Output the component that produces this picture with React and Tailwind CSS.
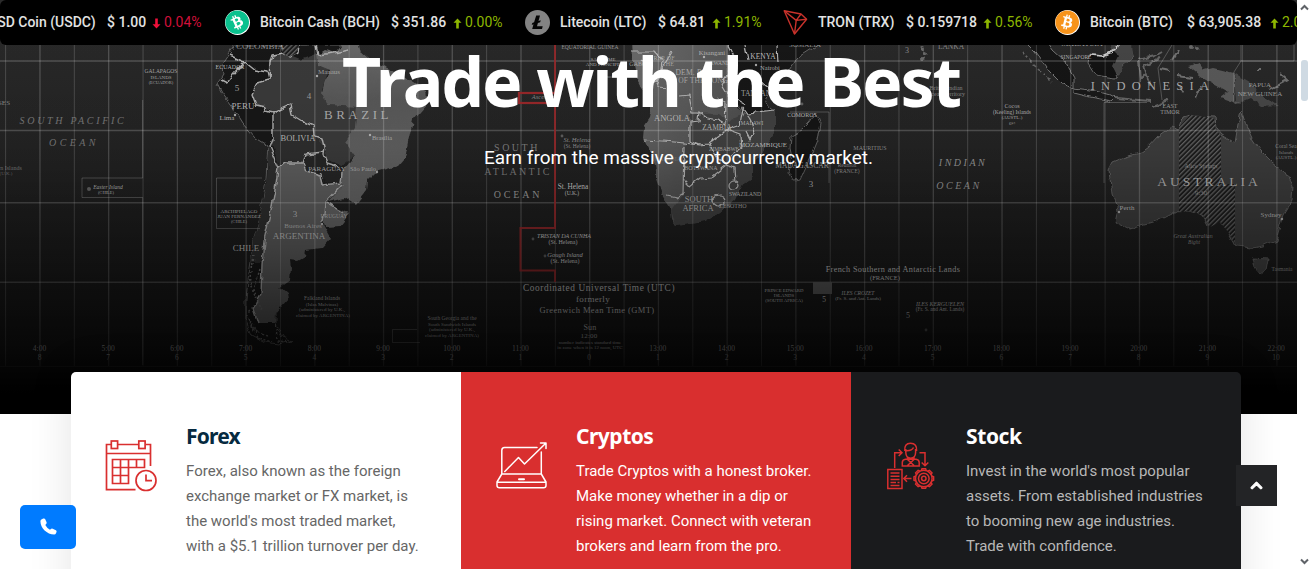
import React from "react";
import { FaBitcoin, FaPhoneAlt, FaChevronUp } from "react-icons/fa";

const up = "#8db600";
const down = "#f0103a";

function Arrow({ color, flip }) {
  return (
    <svg width="9" height="11" viewBox="0 0 9 11" className={flip ? "rotate-180" : ""}>
      <path d="M4.5 0.5 L8.5 4.8 H5.8 V10.5 H3.2 V4.8 H0.5 Z" fill={color} />
    </svg>
  );
}

function BtcLogo() {
  return (
    <span className="block size-[25px] rounded-full bg-white p-[0.3px]">
      <FaBitcoin className="size-full text-[#f7931a]" />
    </span>
  );
}

function BchLogo() {
  return (
    <span className="block size-[25px] rounded-full bg-white p-[0.3px]">
      <FaBitcoin className="size-full -rotate-[38deg] text-[#0ac18e]" />
    </span>
  );
}

function LtcLogo() {
  return (
    <svg width="25" height="25" viewBox="0 0 25 25">
      <circle cx="12.5" cy="12.5" r="12.5" fill="#838383" />
      <path d="M11.2 5.5h3.8l-1.5 5.6 2.2-.8-.5 2-2.3.8-.9 3.2h5.7l-.7 2.7H7.2l1.3-4.8-1.8.7.6-2 1.8-.7z" fill="#050505" />
    </svg>
  );
}

function TrxLogo() {
  return (
    <svg width="25" height="25" viewBox="0 0 25 25" fill="none" stroke="#c8322b" strokeWidth="1.4" strokeLinejoin="round">
      <path d="M1.2 0.8 L18 4 L23.6 9.2 L11.5 24 Z" />
      <path d="M1.2 0.8 L13.2 10.4 L23.6 9.2 M18 4 L13.2 10.4 L11.5 24" />
    </svg>
  );
}

function Coin({ logo, name, price, pct, dir, itemW, nameW, priceW }) {
  return (
    <div className={`flex h-[45px] shrink-0 items-center ${itemW}`}>
      <span className="w-[35px] shrink-0">{logo}</span>
      <span className={`shrink-0 ${nameW}`}>{name}</span>
      <span className={`shrink-0 ${priceW}`}>{price}</span>
      <span className="flex w-[12px] shrink-0 pt-[2px]">
        <Arrow color={dir === "up" ? up : down} flip={dir === "down"} />
      </span>
      <span className={dir === "up" ? "font-normal text-[#8db600]" : "font-normal text-[#f0103a]"}>{pct}</span>
    </div>
  );
}

function Ticker() {
  return (
    <div className="relative flex h-[45px] overflow-hidden rounded-md bg-black font-[Roboto,sans-serif] text-[14px] font-medium whitespace-nowrap text-[#e2e2e2]">
      <div className="flex h-[45px] w-[225px] shrink-0 items-center">
        <span className="-ml-[12px] w-[119px] shrink-0">USD Coin (USDC)</span>
        <span className="w-[45px] shrink-0">$ 1.00</span>
        <span className="flex w-[12px] shrink-0 pt-[2px]"><Arrow color={down} flip /></span>
        <span className="font-normal text-[#d0103a]">0.04%</span>
      </div>
      <Coin logo={<BchLogo />} name="Bitcoin Cash (BCH)" price="$ 351.86" pct="0.00%" dir="up" itemW="w-[300px]" nameW="w-[131px]" priceW="w-[62px]" />
      <Coin logo={<LtcLogo />} name="Litecoin (LTC)" price="$ 64.81" pct="1.91%" dir="up" itemW="w-[258px]" nameW="w-[98px]" priceW="w-[54px]" />
      <Coin logo={<TrxLogo />} name="TRON (TRX)" price="$ 0.159718" pct="0.56%" dir="up" itemW="w-[272px]" nameW="w-[88px]" priceW="w-[77px]" />
      <Coin logo={<BtcLogo />} name="Bitcoin (BTC)" price="$ 63,905.38" pct="2.07%" dir="up" itemW="w-[300px]" nameW="w-[97px]" priceW="w-[83px]" />
    </div>
  );
}

/* x, y, text, size, letter-spacing, opacity, italic */
const labels = [
  [73, 124, "SOUTH  PACIFIC", 10, 2.7, 0.5, 1],
  [74, 146, "OCEAN", 10, 3.4, 0.5, 1],
  [161, 73, "GALAPAGOS", 5.5, 0, 0.8], [161, 79, "ISLANDS", 5, 0, 0.8], [161, 84, "(ECUADOR)", 4.5, 0, 0.8],
  [4, 105, "SES", 7, 0, 0.6], [10, 170, "rn Islands", 6, 0, 0.5], [6, 175, "(U.K.)", 5, 0, 0.45],
  [260, 49, "COLOMBIA", 9, 0, 0.7], [230, 69, "ECUADOR", 6, 0, 0.9],
  [237, 91, "5", 9, 0, 0.8], [309, 99, "4", 9, 0, 0.7], [243, 109, "PERU", 9, 0, 0.9],
  [227, 120, "Lima", 7, 0, 0.9], [329, 74, "Manaus", 7, 0, 0.7],
  [358, 119, "BRAZIL", 13, 3.5, 0.8], [382, 140, "Brasília", 6.5, 0, 0.75],
  [298, 141, "BOLIVIA", 8.5, 0, 0.9], [327, 171, "PARAGUAY", 7, 0, 0.85], [363, 171, "São Paulo", 6.5, 0, 0.75],
  [108, 189, "Easter Island", 5.5, 0, 0.9, 1], [106, 194, "(CHILE)", 4.5, 0, 0.9],
  [239, 213, "ARCHIPIELAGO", 5, 0, 0.95], [239, 218, "JUAN FERNANDEZ", 5, 0, 0.95], [239, 223, "(CHILE)", 4.5, 0, 0.9],
  [295, 217, "3", 9, 0, 0.9], [303, 228, "Buenos Aires", 7, 0, 0.8], [299, 239, "ARGENTINA", 9, 0, 0.95],
  [334, 218, "URUGUAY", 5.5, 0, 0.8], [246, 251, "CHILE", 9, 0, 0.95],
  [322, 300, "Falkland Islands", 5.5, 0, 0.9], [322, 305.5, "(Islas Malvinas)", 5, 0, 0.9], [322, 311, "(administered by U.K.,", 5, 0, 0.9], [323, 316.5, "claimed by ARGENTINA)", 5, 0, 0.9],
  [452, 320, "South Georgia and the", 5.5, 0, 0.9], [452, 325.5, "South Sandwich Islands", 5, 0, 0.9], [452, 331, "(administered by U.K.,", 5, 0, 0.9], [452, 336.5, "claimed by ARGENTINA)", 5, 0, 0.9],
  [590, 49, "EQUATORIAL GUINEA", 5.5, 0, 0.7], [603, 61, "SAO TOME", 5, 0, 0.8], [603, 66, "AND PRINCIPE", 5, 0, 0.8], [610, 78, "(Annobón)", 5, 0, 0.6],
  [545, 99, "Ascension", 6.5, 0, 0.6, 1],
  [664, 60, "REP. OF", 6, 0, 0.7], [668, 66, "THE", 6, 0, 0.7], [640, 66, "GABON", 6, 0, 0.7],
  [694, 75, "DEM. REP.", 7.5, 0.2, 0.75], [706, 83, "OF THE CONGO", 7.5, 0.1, 0.7],
  [712, 55, "Kisangani", 6.5, 0, 0.85], [763, 59, "KENYA", 7.5, 0, 0.95], [770, 70, "Nairobi", 6.5, 0, 0.85],
  [722, 65, "RWANDA", 5.5, 0, 0.8], [760, 96, "TANZANIA", 7.5, 0, 0.8],
  [672, 121, "ANGOLA", 8.5, 0, 0.9], [717, 130, "ZAMBIA", 7.5, 0, 0.85], [752, 125, "MALAWI", 5.5, 0, 0.85],
  [763, 147, "MOZAMBIQUE", 7, 0, 0.9], [724, 151, "ZIMBABWE", 5.5, 0, 0.8], [701, 170, "BOTSWANA", 6, 0, 0.8],
  [668, 161, "NAMIBIA", 6, 0, 0.3], [802, 117, "COMOROS", 6, 0, 0.9], [802, 168, "MADAGASCAR", 7.5, 0, 0.75],
  [805, 47, "SOMALIA", 7, 0, 0.7], [811, 187, "3", 9, 0, 0.8], [870, 150, "MAURITIUS", 6, 0, 0.65],
  [847, 167, "Reunion", 5.5, 0, 0.65], [847, 173, "(FRANCE)", 5.5, 0, 0.65],
  [699, 202, "SOUTH", 8.5, 0, 0.85], [698, 211, "AFRICA", 8.5, 0, 0.85], [745, 196, "SWAZILAND", 5.5, 0, 0.9], [733, 208, "LESOTHO", 6, 0, 0.75],
  [517, 151, "SOUTH", 10, 2.5, 0.55], [518, 175, "ATLANTIC", 10, 2.3, 0.55], [518, 198, "OCEAN", 10, 2.8, 0.75],
  [577, 142, "St. Helena", 6.5, 0, 0.65, 1], [577, 148, "(St. Helena)", 5.5, 0, 0.65], [573, 189, "St. Helena", 7.3, 0, 1], [572, 195, "(U.K.)", 5.5, 0, 1],
  [564, 238, "TRISTAN DA CUNHA", 6, 0, 1, 1], [563, 244, "(St. Helena)", 6, 0, 1], [565, 256.5, "Gough Island", 6.5, 0, 1, 1], [565, 262.5, "(St. Helena)", 6, 0, 1],
  [599, 291, "Coordinated Universal Time (UTC)", 9.3, 0.6, 1], [593, 302, "formerly", 9, 0.3, 1], [597, 313, "Greenwich Mean Time (GMT)", 8.5, 0.4, 1],
  [590, 330, "Sun", 8, 0.2, 1], [589, 338, "12:00", 7, 0.2, 1], [590, 343.5, "number indicates standard time", 5, 0, 1], [590, 348.5, "in zone when it is 12 noon, UTC", 5, 0, 1],
  [893, 272, "French Southern and Antarctic Lands", 8.2, 0.35, 1], [885, 280, "(FRANCE)", 6.5, 0, 1],
  [784, 292, "PRINCE EDWARD", 4.8, 0, 1], [784, 297, "ISLANDS", 4.8, 0, 1], [784, 302, "(SOUTH AFRICA)", 4.8, 0, 1],
  [824, 302, "5", 7.5, 0, 1], [858, 294.5, "ILES CROZET", 5.5, 0, 1, 1], [858, 300, "(Fr. S. and Ant. Lands)", 5, 0, 1],
  [940, 305.5, "ILES KERGUELEN", 6, 0, 1, 1], [940, 311, "(Fr. S. and Ant. Lands)", 5.3, 0, 1], [908, 318, "5", 8, 0, 0.9],
  [963, 166, "INDIAN", 10, 2.5, 0.7, 1], [959, 189, "OCEAN", 10, 2.5, 0.7, 1],
  [951, 49, "LANKA", 7.5, 0, 0.6], [907, 53, "3", 8, 0, 0.6], [946, 90, "British Indian", 6, 0, 0.6], [946, 96, "Ocean Territory", 6, 0, 0.6],
  [1012, 108, "Cocos", 6, 0, 0.85], [1012, 113.5, "(Keeling) Islands", 5.5, 0, 0.85], [1012, 119, "(AUSTL.)", 5, 0, 0.85], [1012, 124.5, "6½", 5, 0, 0.75],
  [1082, 46, "MALAYSIA", 8, 0, 0.8], [1076, 59, "SINGAPORE", 5.5, 0, 0.85],
  [1153, 90, "INDONESIA", 12.5, 6.3, 0.85], [1260, 87, "PAPUA", 7, 0, 0.7], [1260, 96, "NEW GUINEA", 7, 0, 0.7],
  [1170, 108, "EAST", 6, 0, 0.75], [1170, 114, "TIMOR", 6, 0, 0.75],
  [1209, 186, "AUSTRALIA", 13.5, 3, 0.85], [1201, 168, "Alice Springs", 6, 0, 0.6], [1201, 195, "9:30", 7, 0, 0.6],
  [1127, 210, "Perth", 7, 0, 0.95], [1271, 217, "Sydney", 7, 0, 0.9], [1193, 238, "Great Australian", 5.8, 0, 0.65, 1], [1194, 244, "Bight", 5.5, 0, 0.65, 1],
  [1282, 271, "Tasmania", 5.5, 0, 0.7], [1286, 148, "Coral Sea", 5.5, 0, 0.6], [1286, 154, "Islands", 5, 0, 0.6], [1286, 159, "(AUSTL.)", 5, 0, 0.6],
];

const gridXs = Array.from({ length: 38 }, (_, i) => 5.6 + 34.36 * i);
const hours = Array.from({ length: 19 }, (_, i) => ({
  x: 39.5 + 68.7 * i,
  hour: `${i + 4}:00`,
  off: Math.abs(8 - i),
}));

function WorldMap() {
  return (
    <svg className="absolute inset-0" width="1297" height="414" viewBox="0 0 1297 414">
      <defs>
        <linearGradient id="sea" x1="0" y1="0" x2="0" y2="1">
          <stop offset="0" stopColor="#2b2b2b" />
          <stop offset="0.4" stopColor="#222222" />
          <stop offset="0.6" stopColor="#1d1d1d" />
          <stop offset="0.9" stopColor="#181818" />
        </linearGradient>
        <linearGradient id="fade" x1="0" y1="0" x2="0" y2="1">
          <stop offset="0" stopColor="#000" stopOpacity="0" />
          <stop offset="0.35" stopColor="#000" stopOpacity="0.06" />
          <stop offset="0.6" stopColor="#000" stopOpacity="0.36" />
          <stop offset="0.85" stopColor="#000" stopOpacity="0.72" />
          <stop offset="0.95" stopColor="#000" stopOpacity="1" />
        </linearGradient>
        <linearGradient id="brazil" gradientUnits="userSpaceOnUse" x1="0" y1="45" x2="0" y2="200">
          <stop offset="0" stopColor="#686868" />
          <stop offset="0.35" stopColor="#585858" />
          <stop offset="1" stopColor="#666" />
        </linearGradient>
        <linearGradient id="africa" gradientUnits="userSpaceOnUse" x1="640" y1="60" x2="770" y2="130">
          <stop offset="0" stopColor="#686868" />
          <stop offset="1" stopColor="#474747" />
        </linearGradient>
        <pattern id="hatch" width="3.3" height="3.3" patternUnits="userSpaceOnUse" patternTransform="rotate(45)">
          <rect width="3.3" height="3.3" fill="#1c1c1c" />
          <rect width="1.3" height="3.3" fill="#626262" />
        </pattern>
        <filter id="coast" x="-5%" y="-5%" width="110%" height="110%" colorInterpolationFilters="sRGB">
          <feTurbulence type="fractalNoise" baseFrequency="0.11" numOctaves="2" seed="4" />
          <feDisplacementMap in="SourceGraphic" scale="6" xChannelSelector="R" yChannelSelector="G" />
        </filter>
      </defs>
      <rect width="1297" height="414" fill="url(#sea)" />
      <g filter="url(#coast)" strokeLinejoin="round">
        {/* South America */}
        <path d="M235 45 L228 55 L222 64 L223 75 L217 84 L222 93 L233 108 L243 124 L255 138 L268 146 L267 160 L266 180 L263 200 L259 222 L253 240 L251 262 L248 280 L246 300 L246 320 L252 335 L265 342 L278 344 L292 341 L282 337 L276 325 L276 310 L285 170 L355 100 L355 45 Z" fill="#171717" stroke="#777" strokeWidth="0.8" />
        <path d="M268 146 L267 180 L263 200 L259 222 L253 240 L251 262 L262 262 L270 215 L280 168 Z" fill="#303030" />
        <path d="M318 40 L318 53 L300 60 L283 53 L273 55 L269 62 L268 80 L258 83 L252 94 L256 105 L265 107 L273 113 L290 105 L292 115 L313 126 L314 136 L325 147 L326 160 L343 165 L355 156 L345 142 L358 125 L360 107 L330 105 L322 90 L325 80 L330 66 L318 65 Z" fill="#3a3a3a" />
        <path d="M358 40 L361 53 L372 62 L400 74 L425 90 L427 104 L413 120 L408 142 L405 158 L398 166 L376 172 L368 180 L367 190 L355 205 L345 198 L328 202 L342 188 L341 172 L345 168 L355 156 L345 142 L355 128 L357 107 L328 105 L322 92 L325 80 L330 70 L318 65 L317 55 L325 50 L335 53 L340 46 L350 40 Z" fill="url(#brazil)" />
        <path d="M273 113 L290 105 L292 115 L313 126 L314 136 L325 147 L323 152 L308 153 L302 163 L280 168 L272 145 Z" fill="#2e2e2e" />
        <path d="M302 163 L308 153 L323 152 L326 163 L333 164 L342 172 L341 182 L325 182 L320 174 L305 170 Z" fill="#262626" />
        <path d="M278 168 L285 163 L302 163 L306 171 L320 175 L325 186 L341 183 L342 190 L325 203 L323 224 L331 238 L322 248 L306 250 L305 256 L298 260 L290 259 L291 268 L290 280 L280 287 L287 293 L288 299 L276 313 L275 324 L258 324 L253 309 L261 295 L262 265 L264 240 L270 215 L275 190 Z" fill="#606060" />
        <path d="M327 203 L345 212 L350 213 L340 226 L326 227 L322 215 Z" fill="#666" />
        <path d="M222 80 L228 83 L233 75 L245 62 L230 55 M245 62 L255 70 L267 72 L269 80 M318 55 L334 53 L348 50 M269 80 L270 62 L272 55 L283 53 M268 80 L258 83 L252 94 L256 105 L265 107 L266 111 L273 113 L290 105 L292 115 L302 121 L313 126 L314 136 L323 138 L325 147 L324 155 L327 163 L340 167 M273 113 L273 138 L270 147 L279 168 L285 163 L302 163 L305 154 L324 152 M278 168 L275 190 L270 215 L264 240 L262 265 L261 295 L253 309 L258 324 M303 163 L306 171 L321 175 L323 185 L341 183 L342 172 M342 185 L325 203 L323 224 M327 203 L343 213 M282 45 L283 53 L290 57 L298 53 L299 45 M316 45 L318 55" fill="none" stroke="#b0b0b0" strokeWidth="1.4" />
        <path d="M276 325 L277 341 L290 342 M254 255 L250 285 L257 300 L247 315 L258 338 L272 342 M260 270 L254 290 L262 310 M250 320 L256 332 L268 336" fill="none" stroke="#707070" strokeWidth="1.5" strokeDasharray="2 2" />
        {/* Africa */}
        <path d="M728 40 L728 95 L745 113 L775 112 L765 104 L770 90 L790 70 L800 56 L825 40 Z" fill="#171717" stroke="#777" strokeWidth="0.8" />
        <path d="M632 40 L633 60 L636 75 L641 85 L648 95 L652 108 L650 118 L644 127 L643 138 L650 152 L655 165 L657 180 L662 195 L671 210 L672 220 L676 226 L690 224 L704 222 L720 213 L735 200 L742 185 L752 178 L752 165 L761 155 L770 140 L775 132 L775 110 L745 113 L727 100 L727 40 Z" fill="url(#africa)" />
        <path d="M690 113 L718 114 L727 122 L745 113 L775 110 L775 132 L761 155 L752 165 L752 178 L742 185 L720 213 L704 222 L676 226 L671 210 L682 195 L684 146 L690 142 Z" fill="#404040" />
        <path d="M632 52 L655 52 L662 60 L660 78 L650 84 M642 60 L650 68 L645 76 M672 52 L664 65 L655 85 M655 87 L674 88 M679 96 L689 95 L692 112 L699 112 L698 121 L690 122 L690 141 L700 145 L684 143 L662 141 L644 140 M699 112 L707 118 L718 120 L725 124 L726 104 L718 97 M700 145 L709 144 L722 134 L726 130 L740 135 L741 148 L730 155 M709 144 L716 156 L727 165 M727 165 L735 168 L736 183 L732 187 M684 146 L683 193 L676 197 L667 195 M683 179 L690 186 L700 178 L712 177 L727 165 M726 130 L740 125 L743 108 L750 118 L754 132 L750 140 L746 132 M748 113 L775 110 M728 45 L735 60 L728 75 L722 85 L728 95 L745 105 M745 45 L748 60 M748 72 L772 90 M777 45 L778 62" fill="none" stroke="#b4b4b4" strokeWidth="1.2" />
        <circle cx="734" cy="185" r="4" fill="#404040" stroke="#b4b4b4" strokeWidth="1.2" />
        <ellipse cx="719" cy="201" rx="6" ry="5" fill="#404040" stroke="#b4b4b4" strokeWidth="1.2" />
        <path d="M816 112 L820 123 L817 140 L808 162 L800 180 L794 181 L789 172 L792 158 L790 148 L791 136 L802 130 L810 122 Z" fill="#151515" stroke="#666" strokeWidth="0.9" />
        {/* South-east Asia */}
        <path d="M1023 40 L1035 52 L1050 72 L1062 84 L1074 88 L1074 78 L1065 62 L1052 50 L1045 40 Z" fill="#151515" stroke="#777" strokeWidth="1" />
        <path d="M1022 52 L1036 66 L1052 82" fill="none" stroke="#666" strokeWidth="1.5" strokeDasharray="3 3" />
        <path d="M1074 88 L1090 90 L1102 93 L1116 97 L1112 101 L1090 97 L1074 93 Z" fill="#191919" stroke="#777" strokeWidth="1" />
        <path d="M1116 98 L1150 101 M1152 106 L1168 100" fill="none" stroke="#666" strokeWidth="2" />
        <path d="M1090 54 L1103 56 L1117 50 L1130 42 L1133 56 L1122 66 L1116 78 L1095 75 L1088 64 Z" fill="#121212" stroke="#6a6a6a" strokeWidth="1" />
        <path d="M1110 48 L1120 40 L1132 42 L1133 56 L1122 66 L1118 76 L1113 66 L1118 56 Z" fill="#454545" />
        <path d="M1090 55 L1103 56 L1116 50 L1120 40" fill="none" stroke="#ccc" strokeWidth="1.5" />
        <path d="M1138 60 L1155 56 L1162 52 M1138 62 L1140 80 L1146 74 L1150 84 L1144 66 L1160 58" fill="none" stroke="#666" strokeWidth="2" />
        <path d="M1172 60 L1178 50 M1160 68 L1170 70 M1176 76 L1192 78 M1196 98 L1200 88 M1262 70 L1258 70 M1268 90 L1288 80 L1280 73 M1180 88 L1184 92" fill="none" stroke="#707070" strokeWidth="2" />
        <path d="M1188 66 L1200 63 L1205 70 L1213 68 L1234 73 L1234 103 L1220 98 L1228 92 L1210 82 L1200 76 Z" fill="#595959" />
        <path d="M1234 73 L1250 82 L1258 93 L1278 106 L1262 107 L1250 98 L1236 104 Z" fill="#474747" />
        <g fill="#6a6a6a"><circle cx="923" cy="48" r="2" /><circle cx="925" cy="53" r="2" /><circle cx="923" cy="59" r="2" /><circle cx="1191" cy="47" r="2" /><circle cx="1197" cy="49" r="2" /></g>
        {/* Australia */}
        <path d="M1109 170 L1113 162 L1125 157 L1140 153 L1148 147 L1158 136 L1172 126 L1179 130 L1183 118 L1190 116 L1215 117 L1216 128 L1222 135 L1235 143 L1238 125 L1241 110 L1246 125 L1252 138 L1260 150 L1272 162 L1285 172 L1293 185 L1292 200 L1283 215 L1278 232 L1276 240 L1262 246 L1252 248 L1236 246 L1229 233 L1220 222 L1208 225 L1203 215 L1190 211 L1175 212 L1155 222 L1130 229 L1115 222 L1118 210 L1112 195 Z" fill="#3d3d3d" stroke="#6c6c6c" strokeWidth="0.8" />
        <path d="M1252 258 L1268 259 L1266 270 L1260 274 L1254 267 Z" fill="#454545" stroke="#6c6c6c" strokeWidth="0.8" />
      </g>
      <path d="M1179 127 L1190 115 L1214 118 L1216 130 L1221 136 L1221 184 L1235 184 L1235 244 L1229 233 L1220 222 L1210 227 L1203 215 L1190 211 L1179 212 Z" fill="url(#hatch)" />
      <path d="M282 45 h17 l-2 8 -7 4 -8 -4 z" fill="url(#hatch)" />
      <g stroke="#fff" strokeOpacity="0.2">
        {gridXs.map((x, i) => <path key={i} d={`M${x} 45 V366`} strokeWidth={i % 2 ? 1.3 : 0.9} />)}
        {[61, 130.5, 202.7, 282.3].map((y) => <path key={y} d={`M0 ${y} H1297`} strokeWidth="1.4" />)}
        <path d="M0 366.5 H1297" strokeOpacity="0.12" />
      </g>
      <g fill="none" stroke="#fff" strokeOpacity="0.22">
        <path d="M142.7 100 V178 H82 V197.5 H142.7 V365" />
        <path d="M262 178 H216.5 V228.5 H260" />
        <path d="M1104 183 V102.5 H1147 M1241 45 V61 L1234 72 V103 H1241 M1294 45 V61 H1241 M829 183 V112 H790 M1172 45 L1158 68 L1162 100" />
        <path d="M417 329.5 H392.5 V342.5 H420" />
      </g>
      <g fill="none" stroke="#98282a">
        <path d="M555 45 V228 H520.5 V270.5 H555 V282" strokeWidth="2" strokeOpacity="0.9" />
        <rect x="519" y="93" width="36" height="10" strokeWidth="2.2" />
      </g>
      <rect x="813" y="282" width="19" height="12" fill="#5e5e5e" />
      <g fill="#ccc" fillOpacity="0.8">
        <circle cx="89" cy="189" r="2" fillOpacity="0.4" />
        {[[235, 115], [317, 76], [370, 135], [377, 172], [322, 224], [704, 57], [756, 65], [1119, 212], [1282, 219]].map(([x, y]) => <circle key={x} cx={x} cy={y} r="1.2" />)}
        {[[533, 239], [545, 256], [562, 136], [802, 104], [926, 330]].map(([x, y]) => <circle key={x} cx={x} cy={y} r="1.4" fillOpacity="0.35" />)}
      </g>
      <g fontFamily="Liberation Serif, serif" textAnchor="middle" fill="#c8c8c8" xmlSpace="preserve">
        {labels.map(([x, y, t, s, ls, o, it]) => (
          <text key={`${x}-${y}`} x={x} y={y} fontSize={s} letterSpacing={ls} fillOpacity={o} fontStyle={it ? "italic" : "normal"}>{t}</text>
        ))}
        {hours.map((h) => (
          <g key={h.x} fontSize="7.5" fillOpacity="0.95">
            {h.off !== 0 && <text x={h.x} y="350.5">{h.hour}</text>}
            <text x={h.x} y="360">{h.off}</text>
          </g>
        ))}
      </g>
      <rect width="1297" height="414" fill="url(#fade)" />
    </svg>
  );
}

function CalendarIcon() {
  return (
    <svg width="52" height="52" viewBox="0 0 52 52" fill="none" stroke="#d92f2f" strokeWidth="1.7">
      <path d="M6 4.5 H1.5 V49.7 H30.5 M13 4.5 H33.5 M41 4.5 H45.5 V26 M1.5 13.5 H45.5" />
      <rect x="6.3" y="1" width="6.3" height="7.5" />
      <rect x="33.8" y="1" width="6.3" height="7.5" />
      <path d="M7.5 19.5 H39.5 V27.5 H7.5 Z M7.5 27.5 V43.5 H23.5 V19.5 M15.5 19.5 V43.5 M31.5 19.5 V27.5 M7.5 35.5 H23.5" />
      <circle cx="41" cy="40.5" r="10" />
      <path d="M41 34.5 V40.7 H47" />
    </svg>
  );
}

function LaptopIcon() {
  return (
    <svg width="52" height="48" viewBox="0 0 52 48" fill="none" stroke="#fff" strokeWidth="1.5" strokeLinejoin="round" strokeLinecap="round">
      <path d="M41 5.5 H8.5 Q5.8 5.5 5.8 8.5 V32 M45.3 10 V32 M5.8 32 H45.3 L50 40 V43.5 Q50 45.8 47.5 45.8 H3.5 Q1 45.8 1 43.5 V40 Z M1 40.3 H50" />
      <path d="M8.8 29.5 L22.5 15.5 L28.5 22 L49.5 1.5 M44.5 1 H50 V6.5" />
      <path d="M23 37.3 H28" strokeWidth="2" />
    </svg>
  );
}

function StockIcon() {
  const teeth = Array.from({ length: 8 }, (_, i) => i * 45);
  return (
    <svg width="48" height="49" viewBox="0 0 48 49" fill="none" stroke="#d92f2f" strokeWidth="1.5">
      <path d="M17.8 9 Q17 1.3 23.5 1.3 Q30.3 1.3 29.6 9 M18.8 7 V10.5 Q19 16 23.7 16.2 Q28.4 16 28.6 10.5 V7 M18.8 8.7 Q25 9 26.5 5.5 M20.5 15 V17.5 M27 15 V17.5 M15.3 24 V20.5 Q15.3 17.8 18.5 17.3 H29 Q32.2 17.8 32.2 20.5 V24 Z M20.5 17.5 L27 23.5 M27 17.5 L20.5 23.5" />
      <path d="M7.7 26 V10.7 H14.5 M11.7 7.5 L15 10.7 L11.7 14 M32.5 10.7 H38 V23.5 M34.7 20.5 L38 23.8 L41.3 20.5 M24.5 36.5 H17 M20 33.3 L16.8 36.5 L20 39.8" />
      <path d="M0.8 27.5 H15 V46.5 H0.8 Z M3.5 31 H12.5 M3.5 34.2 H12.5 M3.5 37.4 H12.5 M3.5 40.6 H9 M10.5 40.6 H12.5 M3.5 43.6 H12.5" />
      <circle cx="36.8" cy="36.5" r="8.3" />
      <circle cx="36.8" cy="36.5" r="5.3" />
      <circle cx="36.8" cy="36.5" r="2.2" />
      {teeth.map((a) => (
        <path key={a} d="M34.3 28.7 L35 26.7 H38.6 L39.3 28.7" transform={`rotate(${a} 36.8 36.5)`} />
      ))}
    </svg>
  );
}

function ServiceCard({ icon, title, lines, box, heading, body }) {
  return (
    <article className={`flex w-[390px] shrink-0 pt-[50px] ${box}`}>
      <div className="w-[115px] shrink-0 pt-[18px] pl-[34px]">{icon}</div>
      <div>
        <h3 className={`h-[37px] font-['Noto_Sans','Open_Sans',sans-serif] text-[21px] leading-[28px] font-bold ${heading}`}>{title}</h3>
        <p className={`font-[Roboto,sans-serif] text-[15px] leading-[25px] whitespace-nowrap ${body}`}>
          {lines.map((l) => <span key={l} className="block">{l}</span>)}
        </p>
      </div>
    </article>
  );
}

export default function App() {
  return (
    <div className="relative flex h-[569px] w-[1312px] overflow-hidden bg-white">
      <main className="w-[1297px] shrink-0">
        <section className="relative h-[414px] overflow-hidden bg-[#222]">
          <WorldMap />
          <Ticker />
          <div className="relative text-white">
            <h1 className="h-[99px] pl-[342px] font-['Noto_Sans','Open_Sans',sans-serif] text-[68px] leading-[72px] font-bold tracking-[-2.12px] whitespace-nowrap">Trade with the Best</h1>
            <p className="pl-[484px] font-[Roboto,sans-serif] text-[19px] leading-[28px] whitespace-nowrap">Earn from the massive cryptocurrency market.</p>
          </div>
        </section>
        <section className="relative -mt-[42px] ml-[71px] flex h-[260px] w-[1170px] overflow-visible rounded-[5px] shadow-[0_0_45px_rgba(0,0,0,0.11)]">
          <ServiceCard
            icon={<CalendarIcon />} title="Forex" box="rounded-l-[5px] bg-white" heading="text-[#062a40] tracking-[-0.8px]" body="text-[#666]"
            lines={["Forex, also known as the foreign", "exchange market or FX market, is", "the world's most traded market,", "with a $5.1 trillion turnover per day."]}
          />
          <ServiceCard
            icon={<div className="pt-[2px] pl-px"><LaptopIcon /></div>} title="Cryptos" box="bg-[#d92f2f]" heading="text-white tracking-[-0.5px]" body="text-white"
            lines={["Trade Cryptos with a honest broker.", "Make money whether in a dip or", "rising market. Connect with veteran", "brokers and learn from the pro."]}
          />
          <ServiceCard
            icon={<div className="pt-[2px] pl-[2px]"><StockIcon /></div>} title="Stock" box="rounded-r-[5px] bg-[#1a1b1d]" heading="text-white tracking-[-0.4px]" body="text-[#b8b8b8]"
            lines={["Invest in the world's most popular", "assets. From established industries", "to booming new age industries.", "Trade with confidence."]}
          />
        </section>
      </main>
      <aside className="flex w-[15px] shrink-0 flex-col items-center justify-between bg-white pt-[4px] pb-[4px]">
        <div className="flex flex-col items-center gap-[49px]">
          <svg width="9" height="7" viewBox="0 0 9 7" fill="none" stroke="#5f6368" strokeWidth="2"><path d="M1 5.5 L4.5 2 L8 5.5" /></svg>
          <div className="h-[41px] w-[7px] rounded-[3px] bg-[#cfdae3]" />
        </div>
        <svg width="9" height="7" viewBox="0 0 9 7" fill="none" stroke="#5f6368" strokeWidth="2"><path d="M1 1.5 L4.5 5 L8 1.5" /></svg>
      </aside>
      <button className="absolute top-[505px] left-[20px] flex h-[44px] w-[56px] items-center justify-center rounded-[5px] bg-[#007bff] text-white">
        <svg className="-mt-[2px]" width="17" height="17" viewBox="0 0 17 17" fill="currentColor">
          <path d="M3.3 0.6 Q4.5 0 5.1 1.100 L6.6 4.300 Q7 5.300 6.100 6.100 L5.300 6.900 Q6.800 9.900 10 11.700 L10.900 10.900 Q11.700 10.200 12.700 10.700 L15.900 12.200 Q17 12.800 16.500 13.900 L16 15.200 Q15.500 16.500 14.200 16.500 C7 16.500 0.400 9.900 0.400 3.200 Q0.400 1.700 1.800 1.200 Z" />
        </svg>
      </button>
      <button className="absolute top-[465px] left-[1236px] flex size-[41px] items-center justify-center bg-[#232426] text-white">
        <FaChevronUp className="size-[13px]" stroke="currentColor" strokeWidth="40" />
      </button>
    </div>
  );
}
